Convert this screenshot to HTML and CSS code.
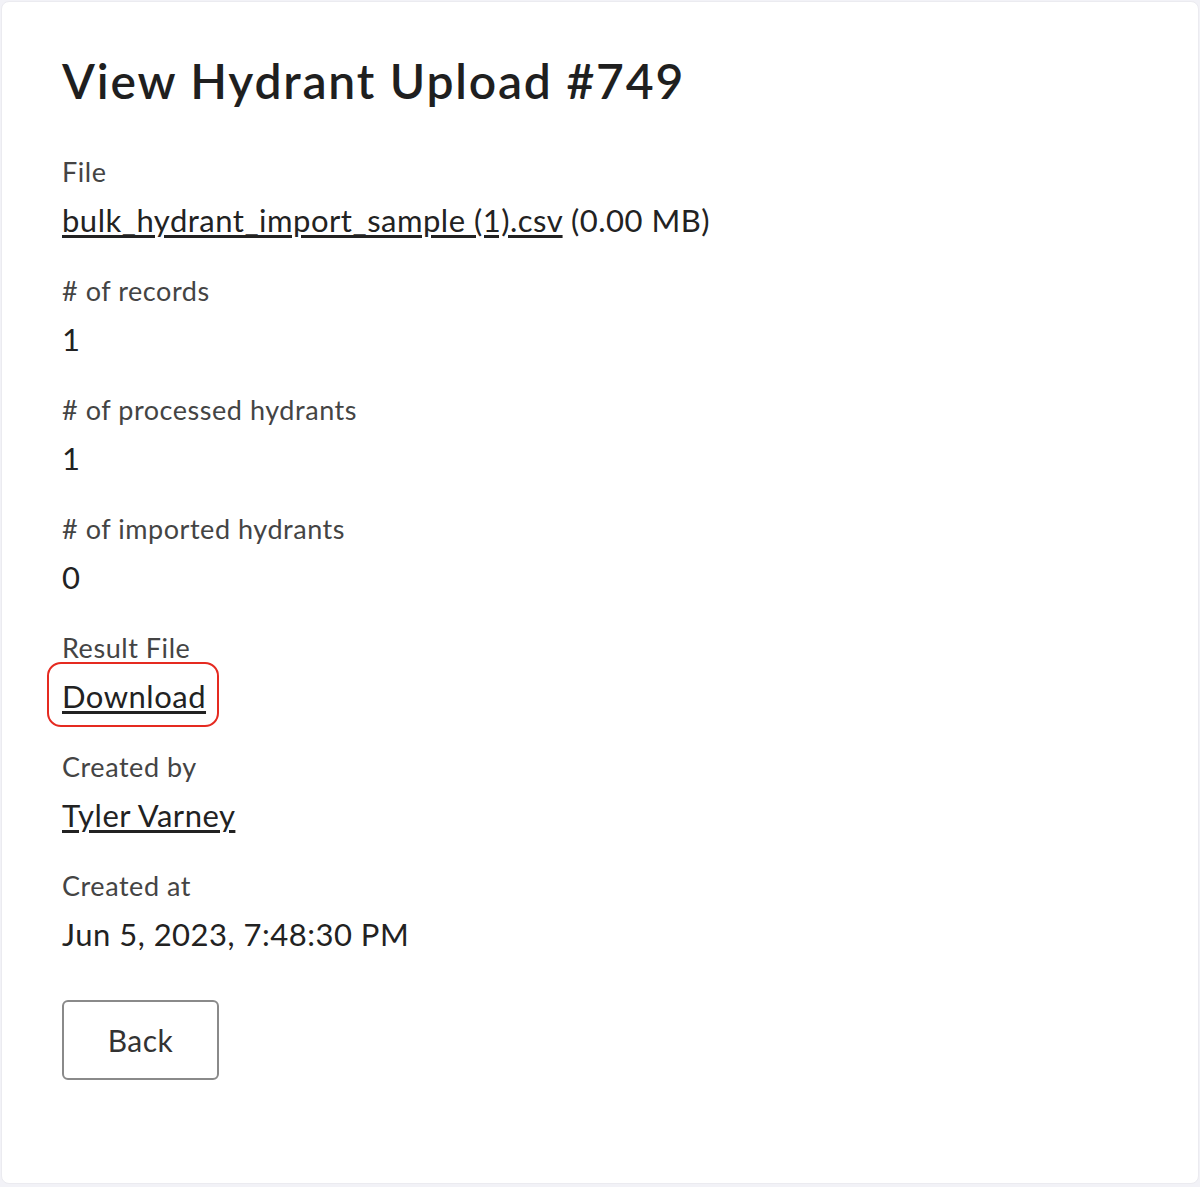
FILE: index.html
```html
<!DOCTYPE html>
<html lang="en">
<head>
    <meta charset="UTF-8">
    <meta name="viewport" content="width=device-width, initial-scale=1.0">
    <title>View Hydrant Upload #749</title>
    <link rel="stylesheet" href="styles.css">
</head>
<body>
    <div class="card">
        <h1>View Hydrant Upload #749</h1>

        <dl class="details">
            <div class="field">
                <dt>File</dt>
                <dd><a href="#">bulk_hydrant_import_sample (1).csv</a> (0.00 MB)</dd>
            </div>
            <div class="field">
                <dt># of records</dt>
                <dd>1</dd>
            </div>
            <div class="field">
                <dt># of processed hydrants</dt>
                <dd>1</dd>
            </div>
            <div class="field">
                <dt># of imported hydrants</dt>
                <dd>0</dd>
            </div>
            <div class="field">
                <dt>Result File</dt>
                <dd><a href="#" class="highlight">Download</a></dd>
            </div>
            <div class="field">
                <dt>Created by</dt>
                <dd><a href="#">Tyler Varney</a></dd>
            </div>
            <div class="field">
                <dt>Created at</dt>
                <dd>Jun 5, 2023, 7:48:30 PM</dd>
            </div>
        </dl>

        <button class="back">Back</button>
    </div>
</body>
</html>
```

FILE: styles.css
```css
body {
    font-family: Lato, "Open Sans", sans-serif;
    background-color: #f2f2f7;
    margin: 0;
    padding: 1px;
    color: #222;
}
.card {
    background: white;
    border: 1px solid #ebebf0;
    border-radius: 8px;
    min-height: 1183px;
    box-sizing: border-box;
    padding: 50px 60px;
}
h1 {
    font-size: 48px;
    font-weight: 600;
    letter-spacing: 1.8px;
    color: #1f1f1f;
    margin: 0 0 45px;
}
.details {
    margin: 0;
}
.field {
    margin-bottom: 35px;
}
dt {
    font-size: 27px;
    letter-spacing: 0.55px;
    color: #444;
    line-height: 36px;
}
dd {
    margin: 12px 0 0;
    font-size: 31px;
    letter-spacing: 0.5px;
    line-height: 36px;
    color: #222;
}
a {
    color: #222;
    text-decoration: underline;
    text-underline-offset: 3px;
}
.highlight {
    position: relative;
}
.highlight::after {
    content: "";
    position: absolute;
    left: -15px;
    right: -13px;
    top: -15px;
    bottom: -12px;
    border: 2.5px solid #e52a20;
    border-radius: 14px;
}
.back {
    margin-top: 13px;
    width: 157px;
    height: 80px;
    background: white;
    border: 2px solid #8a8a8a;
    border-radius: 6px;
    font-family: inherit;
    font-size: 30px;
    letter-spacing: 0.5px;
    color: #333;
    cursor: pointer;
}
```
